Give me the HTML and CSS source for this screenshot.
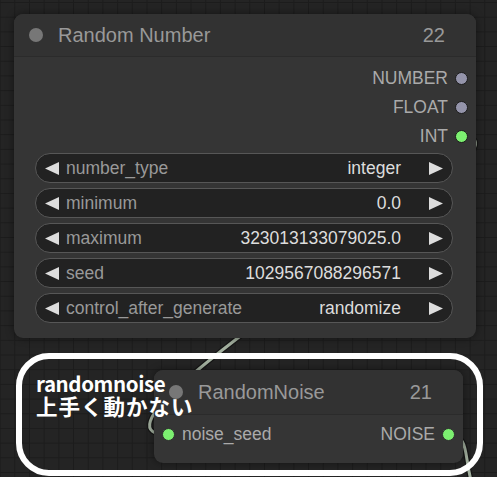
FILE: index.html
```html
<!DOCTYPE html>
<html lang="ja">
<head>
  <meta charset="UTF-8">
  <title>Random Number / RandomNoise</title>
  <link rel="stylesheet" href="styles.css">
</head>
<body>
  <div class="canvas">
    <!-- links are drawn under the nodes -->
    <svg class="links" width="497" height="477" viewBox="0 0 497 477">
      <path class="link-edge" d="M461,136 C568,136 44,435 169,435"/>
      <path class="link" d="M461,136 C568,136 44,435 169,435"/>
      <path class="link-edge" d="M448,435 C472,435 462,458 474,490"/>
      <path class="link" d="M448,435 C472,435 462,458 474,490"/>
    </svg>

    <section class="node node-number">
      <header class="node-title">
        <span class="title-dot"></span>
        <span class="title-text">Random Number</span>
        <span class="node-id">22</span>
      </header>
      <div class="slots">
        <div class="slot out"><span>NUMBER</span><i class="dot"></i></div>
        <div class="slot out"><span>FLOAT</span><i class="dot"></i></div>
        <div class="slot out"><span>INT</span><i class="dot dot-int"></i></div>
      </div>
      <div class="widgets">
        <div class="widget">
          <svg class="arrow" viewBox="0 0 14 13"><path d="M0,6.5 L14,0 L14,13 Z"/></svg>
          <span class="w-label">number_type</span>
          <span class="w-value">integer</span>
          <svg class="arrow arrow-r" viewBox="0 0 14 13"><path d="M14,6.5 L0,0 L0,13 Z"/></svg>
        </div>
        <div class="widget">
          <svg class="arrow" viewBox="0 0 14 13"><path d="M0,6.5 L14,0 L14,13 Z"/></svg>
          <span class="w-label">minimum</span>
          <span class="w-value">0.0</span>
          <svg class="arrow arrow-r" viewBox="0 0 14 13"><path d="M14,6.5 L0,0 L0,13 Z"/></svg>
        </div>
        <div class="widget">
          <svg class="arrow" viewBox="0 0 14 13"><path d="M0,6.5 L14,0 L14,13 Z"/></svg>
          <span class="w-label">maximum</span>
          <span class="w-value">323013133079025.0</span>
          <svg class="arrow arrow-r" viewBox="0 0 14 13"><path d="M14,6.5 L0,0 L0,13 Z"/></svg>
        </div>
        <div class="widget">
          <svg class="arrow" viewBox="0 0 14 13"><path d="M0,6.5 L14,0 L14,13 Z"/></svg>
          <span class="w-label">seed</span>
          <span class="w-value">1029567088296571</span>
          <svg class="arrow arrow-r" viewBox="0 0 14 13"><path d="M14,6.5 L0,0 L0,13 Z"/></svg>
        </div>
        <div class="widget">
          <svg class="arrow" viewBox="0 0 14 13"><path d="M0,6.5 L14,0 L14,13 Z"/></svg>
          <span class="w-label">control_after_generate</span>
          <span class="w-value">randomize</span>
          <svg class="arrow arrow-r" viewBox="0 0 14 13"><path d="M14,6.5 L0,0 L0,13 Z"/></svg>
        </div>
      </div>
    </section>

    <section class="node node-noise">
      <header class="node-title">
        <span class="title-dot"></span>
        <span class="title-text">RandomNoise</span>
        <span class="node-id">21</span>
      </header>
      <div class="slots">
        <div class="slot io">
          <i class="dot dot-int"></i><span class="in-label">noise_seed</span>
          <span class="out-label">NOISE</span><i class="dot dot-int"></i>
        </div>
      </div>
    </section>

    <!-- hand drawn note on top -->
    <svg class="note-ring" width="497" height="477" viewBox="0 0 497 477">
      <rect x="19" y="356" width="461" height="117" rx="30" ry="30"/>
    </svg>
    <div class="note-text">
      <div class="note-en">randomnoise</div>
      <div class="note-ja">上手く動かない</div>
    </div>
  </div>
</body>
</html>
```

FILE: styles.css
```css
/* ====== Canvas ====== */
body{margin:0;background:#222;font-family:'Liberation Sans',Arial,sans-serif;overflow:hidden}
.canvas{position:relative;width:497px;height:477px;overflow:hidden;background-color:#242424;
  background-image:linear-gradient(90deg,#1c1c1c 1px,transparent 1px),linear-gradient(#1c1c1c 1px,transparent 1px);
  background-size:14.7px 14.7px;background-position:-0.4px 2px}
.links,.note-ring{position:absolute;left:0;top:0}
.link-edge{fill:none;stroke:#161616;stroke-width:5.5}
.link{fill:none;stroke:#a3b09f;stroke-width:3}
.note-ring rect{fill:none;stroke:#fff;stroke-width:6}

/* ====== Nodes ====== */
.node{position:absolute;background:#353535;border-radius:9px;box-shadow:0 0 8px rgba(0,0,0,.45);overflow:hidden}
.node-number{left:14px;top:14px;width:462px;height:324px}
.node-noise{left:154px;top:370px;width:309px;height:93px}
.node-title{height:42px;display:flex;align-items:center;padding:0 31px 0 15px;background:#323232;border-bottom:1px solid #2b2b2b;color:#999;font-size:20px}
.node-noise .node-title{height:44px}
.title-dot{width:14px;height:14px;border-radius:50%;background:#777;margin-right:15px;flex:none}
.title-text{flex:1}

/* ====== Slots ====== */
.slots{padding:7px 8px 0 8px}
.node-noise .slots{padding-top:5px}
.slot{height:29px;display:flex;align-items:center;gap:7px;color:#aaa;font-size:17.5px}
.slot.out{justify-content:flex-end}
.slot .in-label{flex:1}
.dot{display:block;flex:none;width:11px;height:11px;border-radius:50%;background:#9494aa;border:1.5px solid #1b1b1b}
.dot-int{background:#7cf070}
.slot.io .dot-int{border-color:#2f2f2f}

/* ====== Widgets ====== */
.widgets{margin:2px 23px 0 21px;display:flex;flex-direction:column;gap:5px}
.widget{height:28px;display:flex;align-items:center;padding:0 9px;background:#222;border:1px solid #575757;border-radius:15px;font-size:17.5px}
.arrow{width:14px;height:13px;fill:#ddd;flex:none}
.arrow-r{margin-left:28px}
.w-label{flex:1;margin-left:7px;color:#999;white-space:nowrap}
.w-value{color:#ddd;white-space:nowrap}

/* ====== Note ====== */
.note-text{position:absolute;left:36px;top:372px;color:#fff;font-family:'Noto Sans CJK JP','Noto Sans',sans-serif;font-weight:700}
.note-en{font-size:20.5px;line-height:22px;letter-spacing:-0.4px}
.note-ja{font-size:21.5px;line-height:24px;letter-spacing:1px}
```
